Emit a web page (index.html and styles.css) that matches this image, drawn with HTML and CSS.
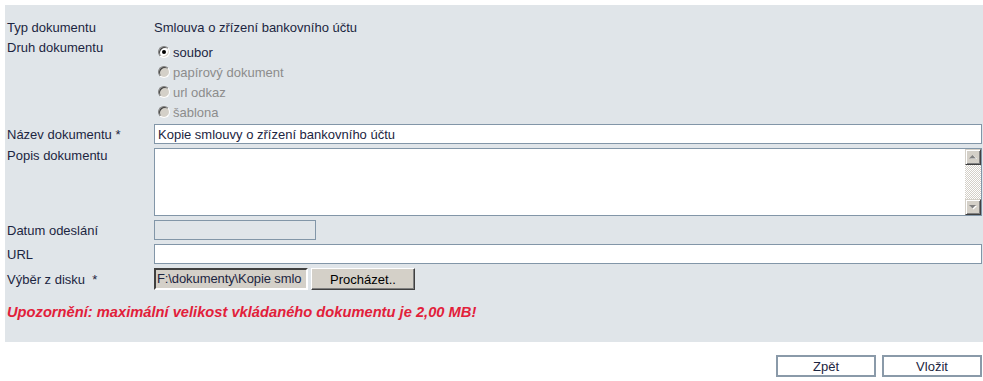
FILE: index.html
```html
<!DOCTYPE html>
<html lang="cs">
<head>
    <meta charset="UTF-8">
    <title>Vložení dokumentu</title>
    <link rel="stylesheet" href="styles.css">
</head>
<body>
    <div class="panel">
        <div class="row row-typ">
            <div class="label">Typ dokumentu</div>
            <div class="value">Smlouva o zřízení bankovního účtu</div>
        </div>

        <div class="row row-druh">
            <div class="label">Druh dokumentu</div>
            <div class="radios">
                <div class="radio-line"><span class="radio checked"></span>soubor</div>
                <div class="radio-line disabled"><span class="radio"></span>papírový dokument</div>
                <div class="radio-line disabled"><span class="radio"></span>url odkaz</div>
                <div class="radio-line disabled"><span class="radio"></span>šablona</div>
            </div>
        </div>

        <div class="row row-field">
            <div class="label">Název dokumentu *</div>
            <input type="text" class="text" value="Kopie smlouvy o zřízení bankovního účtu">
        </div>

        <div class="row row-popis">
            <div class="label">Popis dokumentu</div>
            <div class="memo">
                <textarea></textarea>
                <div class="scrollbar">
                    <div class="sb-btn">
                        <svg width="8" height="5" viewBox="0 0 8 5"><path d="M1 4h7L4.5 0.5z" fill="#fff"/><path d="M0 3.5h7L3.5 0z" fill="#808080"/></svg>
                    </div>
                    <div class="sb-track"></div>
                    <div class="sb-btn">
                        <svg width="8" height="5" viewBox="0 0 8 5"><path d="M1 1h7L4.5 4.5z" fill="#fff"/><path d="M0 0h7L3.5 3.5z" fill="#808080"/></svg>
                    </div>
                </div>
            </div>
        </div>

        <div class="row row-field">
            <div class="label">Datum odeslání</div>
            <input type="text" class="text short" disabled>
        </div>

        <div class="row row-field">
            <div class="label">URL</div>
            <input type="text" class="text">
        </div>

        <div class="row row-file">
            <div class="label">Výběr z disku &nbsp;*</div>
            <div class="file-path">F:\dokumenty\Kopie smlo</div>
            <button type="button" class="browse">Procházet..</button>
        </div>

        <p class="warning">Upozornění: maximální velikost vkládaného dokumentu je 2,00 MB!</p>
    </div>

    <div class="actions">
        <button type="button" class="btn">Zpět</button>
        <button type="button" class="btn">Vložit</button>
    </div>
</body>
</html>
```

FILE: styles.css
```css
body {
    margin: 5px 0 0 5px;
    font-family: "Liberation Sans", Arial, sans-serif;
    font-size: 13px;
    color: #1c2541;
    background-color: #fff;
}
.panel {
    background-color: #e0e5e9;
    height: 337px;
    padding: 12px 1px 0 2px;
    box-sizing: border-box;
}
.row {
    display: flex;
    align-items: center;
}
.label {
    width: 147px;
    flex-shrink: 0;
    line-height: 15px;
}
.row-typ {
    height: 20px;
}
.row-druh {
    align-items: flex-start;
    height: 85px;
}
.row-druh .label {
    line-height: 20px;
    padding-top: 1px;
}
.radios {
    padding-top: 5px;
}
.radio-line {
    display: flex;
    align-items: center;
    height: 20px;
    padding-left: 4px;
}
.radio-line.disabled {
    color: #8c8c8c;
}
.radio {
    width: 12px;
    height: 12px;
    box-sizing: border-box;
    border-radius: 50%;
    border: 1px solid;
    border-color: #808080 #fff #fff #808080;
    box-shadow: inset 1px 1px #404040, inset -1px -1px #d4d0c8;
    background-color: #fff;
    margin-right: 3px;
    position: relative;
}
.radio-line.disabled .radio {
    background-color: #d4d0c8;
}
.radio.checked::after {
    content: "";
    position: absolute;
    left: 3px;
    top: 3px;
    width: 4px;
    height: 4px;
    border-radius: 50%;
    background-color: #000;
}
.row-field {
    margin-top: 4px;
}
.row-druh + .row-field {
    margin-top: 2px;
}
.text {
    flex: 1;
    height: 20px;
    box-sizing: border-box;
    border: 1px solid #8296a8;
    padding: 0 3px;
    font-family: inherit;
    font-size: 13px;
    color: #1c2541;
    background-color: #fff;
    margin: 0;
    outline: none;
}
.text.short {
    flex: none;
    width: 162px;
    background-color: #e0e5e9;
}
.row-popis {
    align-items: flex-start;
    margin-top: 4px;
}
.memo {
    flex: 1;
    display: flex;
    height: 68px;
    box-sizing: border-box;
    border: 1px solid #8296a8;
    background-color: #fff;
}
.memo textarea {
    flex: 1;
    border: none;
    resize: none;
    outline: none;
    margin: 0;
    padding: 2px 3px;
}
.scrollbar {
    width: 16px;
    display: flex;
    flex-direction: column;
}
.sb-btn {
    width: 16px;
    height: 16px;
    box-sizing: border-box;
    background-color: #d4d0c8;
    border: 1px solid;
    border-color: #d4d0c8 #404040 #404040 #d4d0c8;
    box-shadow: inset 1px 1px #fff, inset -1px -1px #808080;
    display: flex;
    align-items: center;
    justify-content: center;
}
.sb-track {
    flex: 1;
    background-color: #fff;
    background-image: repeating-conic-gradient(#d4d0c8 0 25%, #fff 0 50%);
    background-size: 2px 2px;
}
.row-file {
    margin-top: 4px;
}
.file-path {
    width: 154px;
    height: 22px;
    box-sizing: border-box;
    border: 2px solid;
    border-color: #404040 #fff #fff #404040;
    background-color: #d4d0c8;
    padding: 0 1px;
    line-height: 18px;
    white-space: nowrap;
    overflow: hidden;
    color: #1c2541;
    letter-spacing: -0.1px;
}
.browse {
    margin-left: 3px;
    width: 104px;
    height: 22px;
    box-sizing: border-box;
    background-color: #d4d0c8;
    border: 1px solid;
    border-color: #fff #404040 #404040 #fff;
    box-shadow: inset -1px -1px #808080;
    font-family: inherit;
    font-size: 13px;
    color: #000;
    padding: 0;
}
.warning {
    margin: 12px 0 0;
    line-height: 20px;
    font-size: 14.7px;
    font-weight: bold;
    font-style: italic;
    color: #e2203a;
}
.actions {
    display: flex;
    justify-content: flex-end;
    gap: 6px;
    margin: 13px 1px 0 0;
}
.btn {
    width: 100px;
    height: 22px;
    box-sizing: border-box;
    border: 2px solid #8a9aa9;
    background-color: #fff;
    font-family: inherit;
    font-size: 13px;
    color: #1c2541;
    padding: 0;
}
```
